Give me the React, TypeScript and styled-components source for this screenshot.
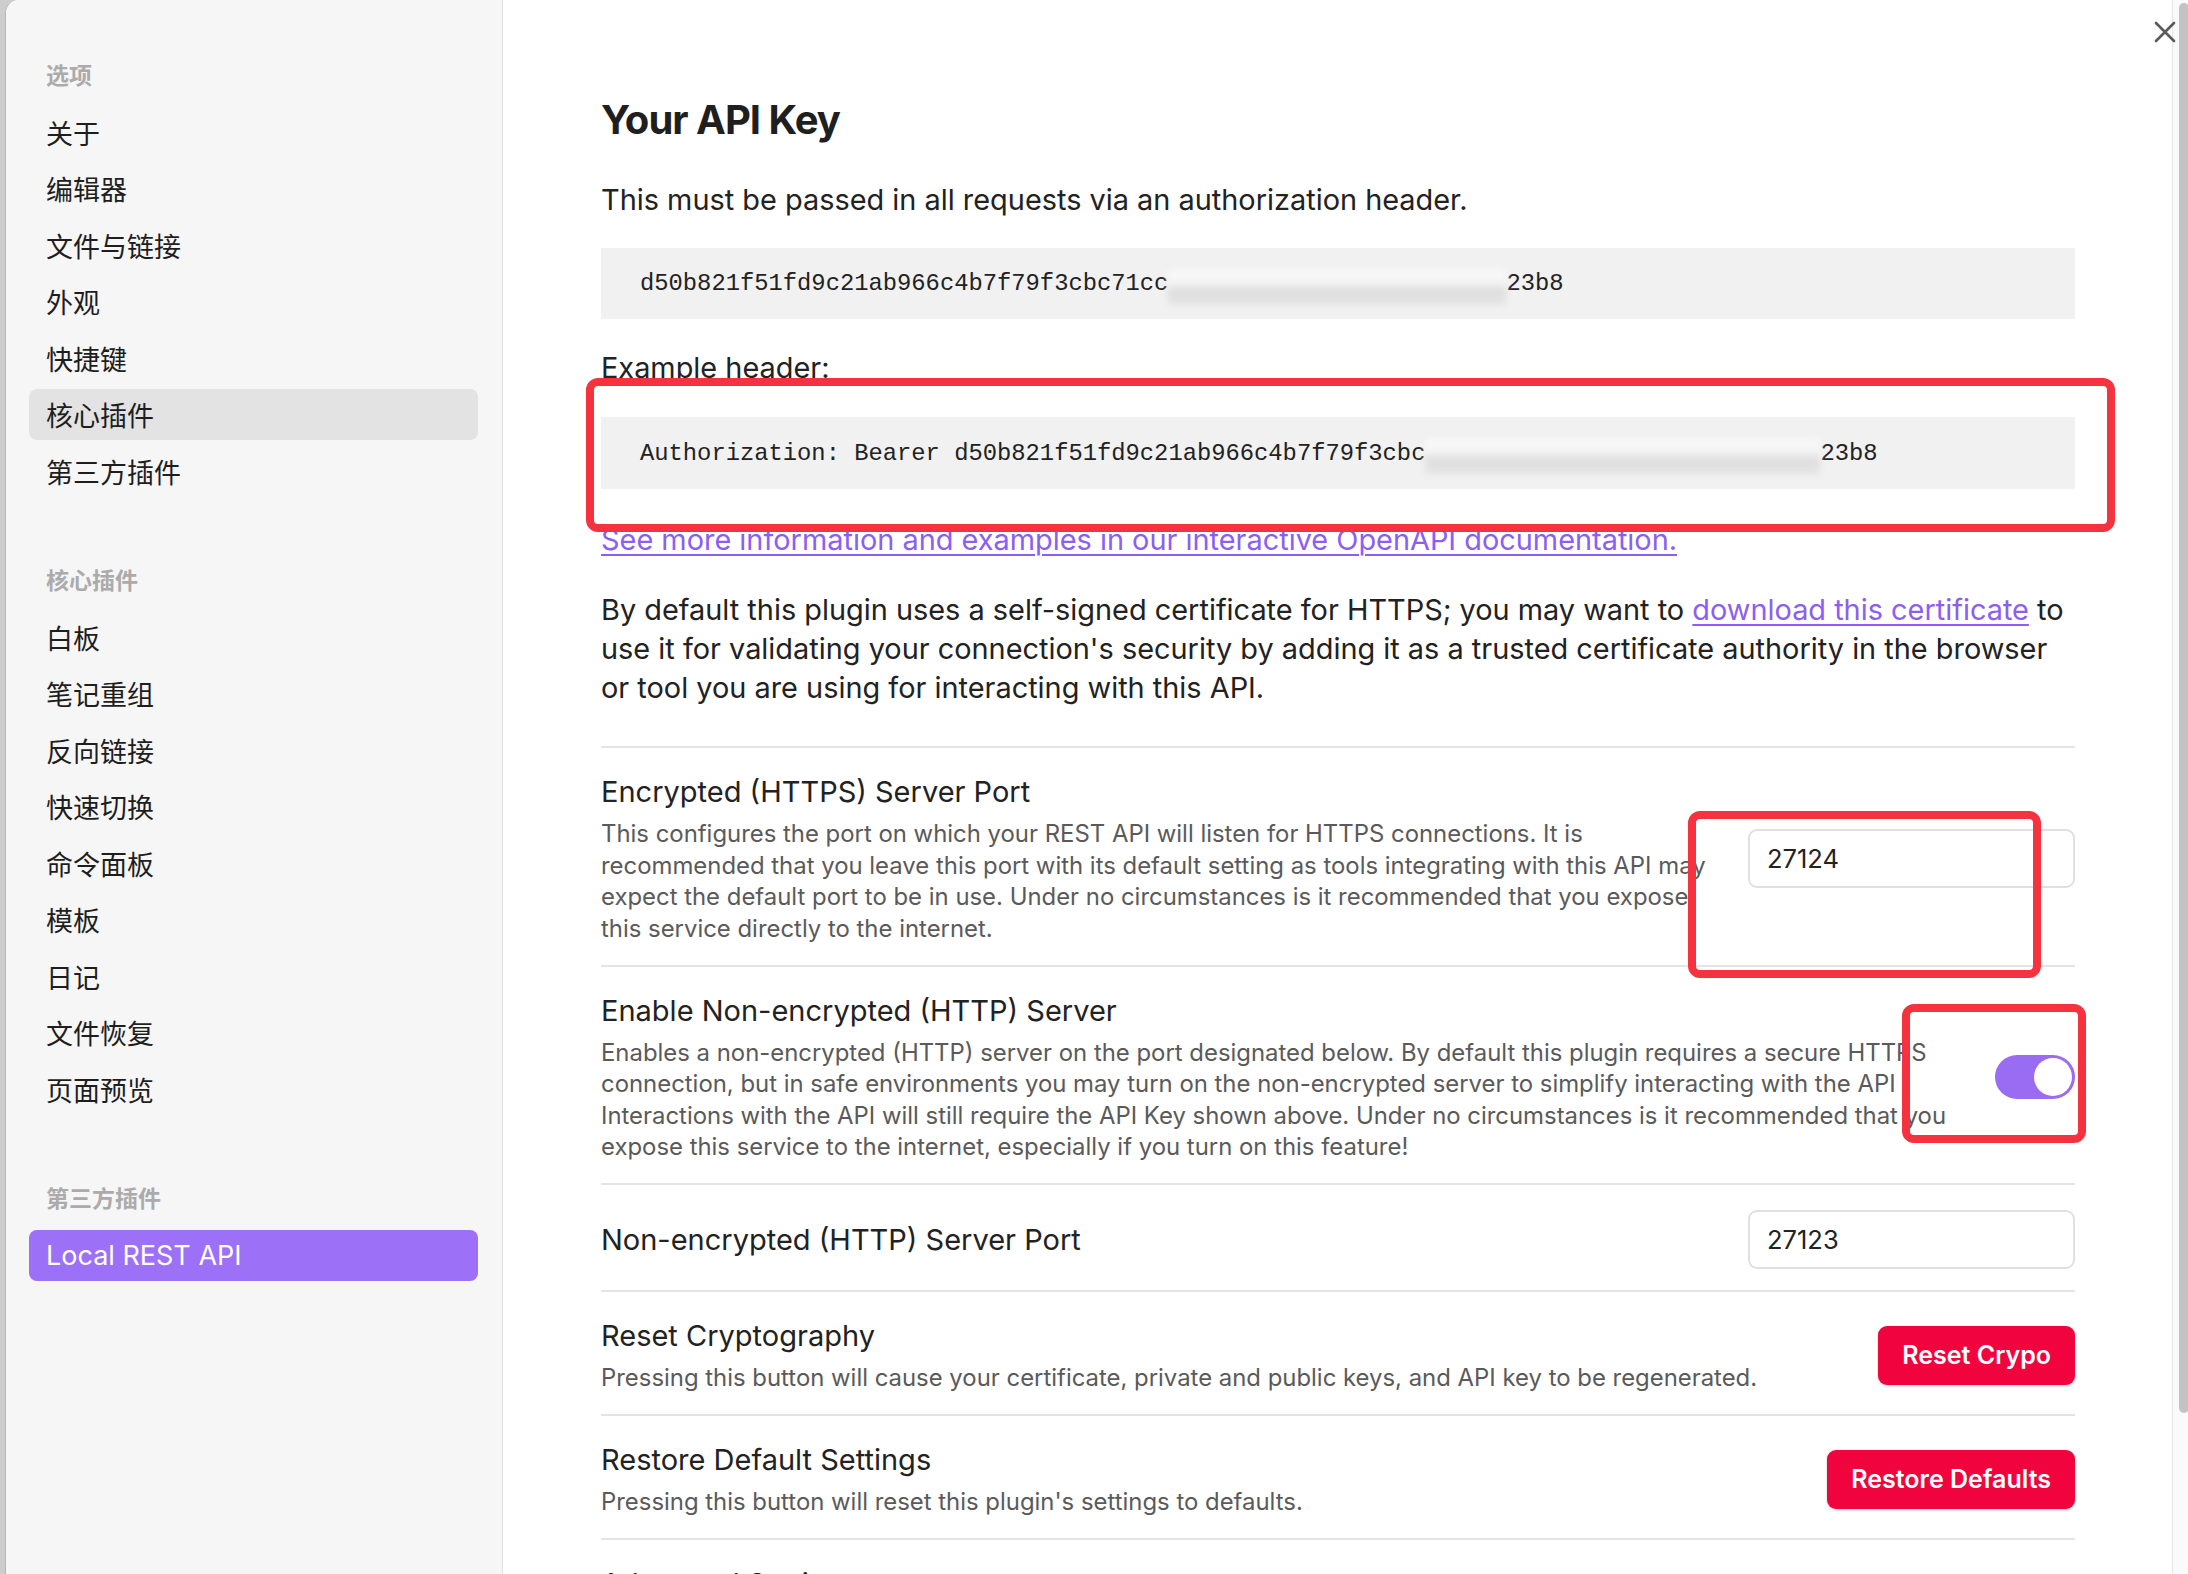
import React from "react";
import styled, { createGlobalStyle } from "styled-components";

const GlobalStyle = createGlobalStyle`
  html, body {
    margin: 0;
    padding: 0;
  }
  body {
    width: 2188px;
    height: 1574px;
    overflow: hidden;
    background: #cdcdcd;
    font-family: Inter, "Noto Sans CJK SC", "Noto Sans", sans-serif;
    color: #222;
  }
  * {
    box-sizing: border-box;
  }
`;

const Desktop = styled.div`
  display: flex;
  height: 1574px;
  padding-left: 5px;
  background: #cdcdcd;
`;

const SettingsWindow = styled.div`
  flex: 1;
  display: flex;
  position: relative;
  background: #ffffff;
  border-left: 1px solid #b5b5b5;
  border-top-left-radius: 14px;
  overflow: hidden;
`;

const Sidebar = styled.nav`
  width: 497px;
  flex-shrink: 0;
  display: flex;
  flex-direction: column;
  padding: 54px 24px 0 23px;
  background: #f6f6f6;
  border-right: 1px solid #e2e2e2;
`;

const NavGroup = styled.div`
  display: flex;
  flex-direction: column;
  gap: 5.5px;

  & + & {
    margin-top: 62.5px;
  }
`;

const NavHeading = styled.div`
  height: 40px;
  display: flex;
  align-items: center;
  padding-left: 17px;
  margin-bottom: 7px;
  font-size: 23px;
  font-weight: 700;
  color: #ababab;
`;

const NavItem = styled.div<{ $state?: "current" | "accent" }>`
  height: 51px;
  display: flex;
  align-items: center;
  padding-left: 17px;
  border-radius: 8px;
  font-size: 27px;
  color: ${(p) => (p.$state === "accent" ? "#ffffff" : "#1e1e1e")};
  background: ${(p) =>
    p.$state === "accent"
      ? "#9d70f8"
      : p.$state === "current"
        ? "#e3e3e3"
        : "transparent"};
`;

const Main = styled.main`
  flex: 1;
  display: flex;
  min-width: 0;
`;

const Content = styled.div`
  flex: 1;
  min-width: 0;
  padding: 0 97px 0 98px;
`;

const ScrollTrack = styled.div`
  width: 16px;
  flex-shrink: 0;
  padding: 3px 0 0 6px;
  border-left: 1px solid #e6e6e6;
  background: #fafafa;
`;

const ScrollThumb = styled.div`
  width: 10px;
  height: 1410px;
  border-radius: 5px;
  background: #c3c3c3;
`;

const CloseButton = styled.button`
  position: absolute;
  top: 21px;
  right: 12px;
  width: 22px;
  height: 22px;
  padding: 0;
  border: none;
  background: transparent;
  z-index: 3;
  cursor: pointer;
`;

const PageTitle = styled.h2`
  margin: 95px 0 0;
  font-size: 40px;
  line-height: 50px;
  font-weight: 700;
  letter-spacing: -1px;
  color: #1f1f1f;
`;

const Paragraph = styled.p<{ $gap: number }>`
  margin: ${(p) => p.$gap}px 0 0;
  font-size: 28.9px;
  line-height: 39px;
  color: #222;
`;

const TextLink = styled.a`
  color: #8c5ef4;
  text-decoration: underline;
  text-decoration-thickness: 2px;
  text-underline-offset: 4px;
`;

const CodeFrame = styled.div<{ $gap: number }>`
  position: relative;
  margin-top: ${(p) => p.$gap}px;
`;

const CodeBlock = styled.pre<{ $h: number }>`
  margin: 0;
  height: ${(p) => p.$h}px;
  display: flex;
  align-items: center;
  padding-left: 39px;
  background: #f1f1f1;
  font-family: "Liberation Mono", "DejaVu Sans Mono", monospace;
  font-size: 23.8px;
  color: #222;
  white-space: pre;
  overflow: hidden;
`;

const Redacted = styled.span<{ $w: number }>`
  display: inline-block;
  width: ${(p) => p.$w}px;
  height: 36px;
  margin-top: 6px;
  background: linear-gradient(
    180deg,
    #f8f8f8 0%,
    #f6f6f6 35%,
    #dedede 60%,
    #e4e4e4 100%
  );
  filter: blur(3px);
`;

const Annotation = styled.div<{
  $top: number;
  $right: number;
  $bottom: number;
  $left: number;
}>`
  position: absolute;
  top: ${(p) => p.$top}px;
  right: ${(p) => p.$right}px;
  bottom: ${(p) => p.$bottom}px;
  left: ${(p) => p.$left}px;
  border: 8px solid #f6323f;
  border-radius: 12px;
  pointer-events: none;
  z-index: 2;
`;

const SettingList = styled.div`
  margin-top: 39px;
`;

const SettingRow = styled.div`
  display: flex;
  align-items: center;
  gap: 30px;
  padding: 25px 0 20.6px;
  border-top: 2px solid #e4e4e4;
`;

const SettingInfo = styled.div`
  flex: 1;
  min-width: 0;
`;

const SettingName = styled.div`
  font-size: 29px;
  line-height: 38px;
  color: #222;
`;

const SettingDesc = styled.div`
  margin-top: 7px;
  font-size: 23.9px;
  line-height: 31.5px;
  color: #5a5a5a;
  white-space: nowrap;
`;

const ControlSlot = styled.div`
  position: relative;
  flex-shrink: 0;
  display: flex;
`;

const PortInput = styled.input`
  width: 327px;
  height: 59px;
  padding: 0 17px;
  border: 2px solid #e0e0e0;
  border-radius: 9px;
  background: #ffffff;
  font-family: Inter, sans-serif;
  font-size: 25.5px;
  color: #222;
  outline: none;
`;

const Toggle = styled.div<{ $on: boolean }>`
  width: 80px;
  height: 44px;
  padding: 3px;
  display: flex;
  justify-content: ${(p) => (p.$on ? "flex-end" : "flex-start")};
  border-radius: 22px;
  background: ${(p) => (p.$on ? "#9a6cf3" : "#d6d6d6")};
`;

const ToggleKnob = styled.div`
  width: 38px;
  height: 38px;
  border-radius: 50%;
  background: #ffffff;
`;

const DangerButton = styled.button`
  height: 59px;
  padding: 0 24px;
  border: none;
  border-radius: 9px;
  background: #f1043e;
  color: #ffffff;
  font-family: Inter, sans-serif;
  font-size: 25px;
  font-weight: 600;
  box-shadow: 0 1px 3px rgba(0, 0, 0, 0.18);
  cursor: pointer;
`;

const navGroups: { title: string; items: string[] }[] = [
  {
    title: "选项",
    items: ["关于", "编辑器", "文件与链接", "外观", "快捷键", "核心插件", "第三方插件"],
  },
  {
    title: "核心插件",
    items: [
      "白板",
      "笔记重组",
      "反向链接",
      "快速切换",
      "命令面板",
      "模板",
      "日记",
      "文件恢复",
      "页面预览",
    ],
  },
  {
    title: "第三方插件",
    items: ["Local REST API"],
  },
];

const KEY_HEAD = "d50b821f51fd9c21ab966c4b7f79f3cbc71cc";
const KEY_TAIL = "23b8";

const App: React.FC = () => {
  return (
    <>
      <GlobalStyle />
      <Desktop>
        <SettingsWindow>
          <Sidebar>
            {navGroups.map((g) => (
              <NavGroup key={g.title}>
                <NavHeading>{g.title}</NavHeading>
                {g.items.map((item, i) => (
                  <NavItem
                    key={`${g.title}-${i}`}
                    $state={
                      item === "Local REST API"
                        ? "accent"
                        : g.title === "选项" && item === "核心插件"
                          ? "current"
                          : undefined
                    }
                  >
                    {item}
                  </NavItem>
                ))}
              </NavGroup>
            ))}
          </Sidebar>

          <Main>
            <Content>
              <PageTitle>Your API Key</PageTitle>
              <Paragraph $gap={35}>
                This must be passed in all requests via an authorization header.
              </Paragraph>

              <CodeFrame $gap={29}>
                <CodeBlock $h={71}>
                  {KEY_HEAD}
                  <Redacted $w={338} />
                  {KEY_TAIL}
                </CodeBlock>
              </CodeFrame>

              <Paragraph $gap={29}>Example header:</Paragraph>

              <CodeFrame $gap={30}>
                <CodeBlock $h={72}>
                  {"Authorization: Bearer d50b821f51fd9c21ab966c4b7f79f3cbc"}
                  <Redacted $w={395} />
                  {KEY_TAIL}
                </CodeBlock>
                <Annotation $top={-39} $right={-40} $bottom={-43} $left={-15} />
              </CodeFrame>

              <Paragraph $gap={31}>
                <TextLink href="#">
                  See more information and examples in our interactive OpenAPI
                  documentation.
                </TextLink>
              </Paragraph>

              <Paragraph $gap={31}>
                By default this plugin uses a self-signed certificate for HTTPS;
                you may want to{" "}
                <TextLink href="#">download this certificate</TextLink> to
                <br />
                use it for validating your connection&apos;s security by adding
                it as a trusted certificate authority in the browser
                <br />
                or tool you are using for interacting with this API.
              </Paragraph>

              <SettingList>
                <SettingRow>
                  <SettingInfo>
                    <SettingName>Encrypted (HTTPS) Server Port</SettingName>
                    <SettingDesc>
                      This configures the port on which your REST API will
                      listen for HTTPS connections. It is
                      <br />
                      recommended that you leave this port with its default
                      setting as tools integrating with this API may
                      <br />
                      expect the default port to be in use. Under no
                      circumstances is it recommended that you expose
                      <br />
                      this service directly to the internet.
                    </SettingDesc>
                  </SettingInfo>
                  <ControlSlot>
                    <PortInput defaultValue="27124" />
                    <Annotation $top={-18} $right={34} $bottom={-90} $left={-60} />
                  </ControlSlot>
                </SettingRow>

                <SettingRow>
                  <SettingInfo>
                    <SettingName>Enable Non-encrypted (HTTP) Server</SettingName>
                    <SettingDesc>
                      Enables a non-encrypted (HTTP) server on the port
                      designated below. By default this plugin requires a secure
                      HTTPS
                      <br />
                      connection, but in safe environments you may turn on the
                      non-encrypted server to simplify interacting with the API
                      <br />
                      Interactions with the API will still require the API Key
                      shown above. Under no circumstances is it recommended that
                      you
                      <br />
                      expose this service to the internet, especially if you
                      turn on this feature!
                    </SettingDesc>
                  </SettingInfo>
                  <ControlSlot>
                    <Toggle $on>
                      <ToggleKnob />
                    </Toggle>
                    <Annotation $top={-51} $right={-11} $bottom={-44} $left={-93} />
                  </ControlSlot>
                </SettingRow>

                <SettingRow>
                  <SettingInfo>
                    <SettingName>Non-encrypted (HTTP) Server Port</SettingName>
                  </SettingInfo>
                  <ControlSlot>
                    <PortInput defaultValue="27123" />
                  </ControlSlot>
                </SettingRow>

                <SettingRow>
                  <SettingInfo>
                    <SettingName>Reset Cryptography</SettingName>
                    <SettingDesc>
                      Pressing this button will cause your certificate, private
                      and public keys, and API key to be regenerated.
                    </SettingDesc>
                  </SettingInfo>
                  <ControlSlot>
                    <DangerButton>Reset Crypo</DangerButton>
                  </ControlSlot>
                </SettingRow>

                <SettingRow>
                  <SettingInfo>
                    <SettingName>Restore Default Settings</SettingName>
                    <SettingDesc>
                      Pressing this button will reset this plugin&apos;s
                      settings to defaults.
                    </SettingDesc>
                  </SettingInfo>
                  <ControlSlot>
                    <DangerButton>Restore Defaults</DangerButton>
                  </ControlSlot>
                </SettingRow>

                <SettingRow>
                  <SettingInfo>
                    <SettingName>Advanced Settings</SettingName>
                  </SettingInfo>
                </SettingRow>
              </SettingList>
            </Content>
            <ScrollTrack>
              <ScrollThumb />
            </ScrollTrack>
          </Main>

          <CloseButton aria-label="Close">
            <svg width="22" height="22" viewBox="0 0 22 22">
              <path
                d="M2 2 L20 20 M20 2 L2 20"
                stroke="#5a5a5a"
                strokeWidth="2.6"
                strokeLinecap="round"
              />
            </svg>
          </CloseButton>
        </SettingsWindow>
      </Desktop>
    </>
  );
};

export default App;
